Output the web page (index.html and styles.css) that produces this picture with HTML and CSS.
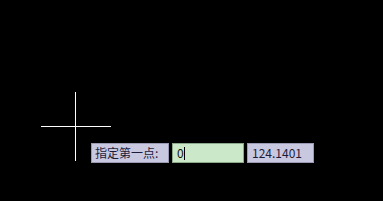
FILE: index.html
```html
<!DOCTYPE html>
<html>
<head>
<meta charset="utf-8">
<link rel="stylesheet" href="styles.css">
</head>
<body>
<div class="canvas">
  <div class="cross">
    <div class="cross-h"></div>
    <div class="cross-v"></div>
  </div>
  <div class="dyn">
    <div class="label">指定第一点:</div>
    <div class="field input">0<span class="caret"></span></div>
    <div class="field value">124.1401</div>
  </div>
</div>
</body>
</html>
```
FILE: styles.css
```css
html, body {
  margin: 0;
  padding: 0;
  background: #000;
}
.canvas {
  position: relative;
  width: 383px;
  height: 201px;
  background: #000;
  overflow: hidden;
}
.cross {
  position: absolute;
  left: 41px;
  top: 92px;
  width: 70px;
  height: 69px;
}
.cross-h {
  position: absolute;
  left: 0;
  top: 34px;
  width: 70px;
  height: 1px;
  background: #fff;
}
.cross-v {
  position: absolute;
  left: 34px;
  top: 0;
  width: 1px;
  height: 69px;
  background: #fff;
}
.dyn {
  position: absolute;
  left: 91px;
  top: 143px;
  display: flex;
  gap: 3px;
  font-family: "Noto Sans CJK SC", "Liberation Sans", sans-serif;
  font-size: 12px;
  color: #1c1c3a;
}
.label, .field {
  box-sizing: border-box;
  height: 20px;
  line-height: 18px;
  border: 1px solid #9a9ab4;
  padding: 0 3px;
  white-space: nowrap;
}
.label {
  width: 78px;
  background: #c8c8e0;
}
.input {
  width: 72px;
  background: #cbe8c9;
  border-color: #8ea88c;
  padding-left: 4px;
  color: #101010;
}
.value {
  width: 67px;
  background: #c8c8e0;
  padding-left: 4px;
}
.caret {
  display: inline-block;
  width: 1px;
  height: 13px;
  background: #000;
  vertical-align: -2px;
}
```
